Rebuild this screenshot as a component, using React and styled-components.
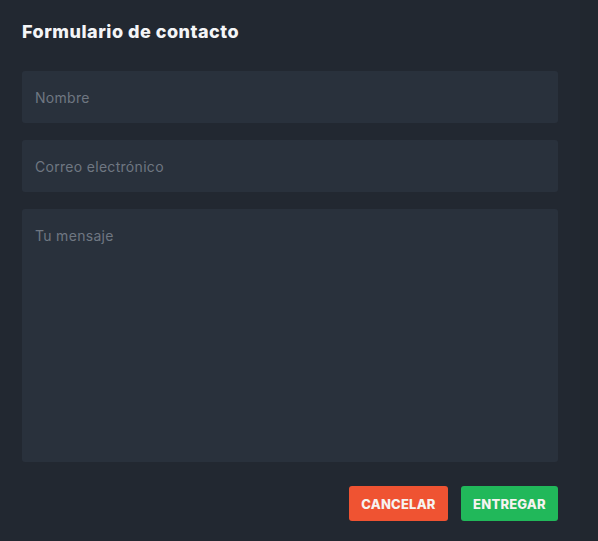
import React from "react";
import styled, { createGlobalStyle } from "styled-components";

const Global = createGlobalStyle`
  html, body { margin: 0; padding: 0; background: #222831; }
  body { font-family: "Inter", "Noto Sans", sans-serif; }
  * { box-sizing: border-box; }
`;

const Page = styled.div`
  width: 598px;
  height: 541px;
  background: #21272f;
  display: flex;
`;

const Modal = styled.form`
  width: 580px;
  background: #222831;
  padding: 21px 22px 0 22px;
  display: flex;
  flex-direction: column;
`;

const Title = styled.h2`
  margin: 0 0 28px 0;
  font-family: "Inter", "Noto Sans", sans-serif;
  font-weight: 800;
  font-size: 18px;
  line-height: 22px;
  color: #f4f5f7;
  letter-spacing: 0.5px;
`;

const Field = styled.input`
  height: 52px;
  width: 100%;
  border: none;
  outline: none;
  border-radius: 3px;
  background: #29313c;
  padding: 0 13px;
  font-family: "Inter", "Noto Sans", sans-serif;
  font-size: 14px;
  letter-spacing: 0.3px;
  color: #d0d4da;
  margin-bottom: 17px;
  &::placeholder { color: #6f7782; }
`;

const Area = styled.textarea`
  height: 253px;
  width: 100%;
  border: none;
  outline: none;
  resize: none;
  border-radius: 3px;
  background: #29313c;
  padding: 17px 13px;
  font-family: "Inter", "Noto Sans", sans-serif;
  font-size: 14px;
  letter-spacing: 0.3px;
  line-height: 20px;
  color: #d0d4da;
  &::placeholder { color: #6f7782; }
`;

const Actions = styled.div`
  display: flex;
  justify-content: flex-end;
  gap: 13px;
  margin-top: 24px;
`;

const Button = styled.button`
  height: 35px;
  width: ${(p) => p.$w}px;
  border: none;
  border-radius: 3px;
  background: ${(p) => p.$bg};
  color: #f6f3f0;
  font-family: "Inter", "Noto Sans", sans-serif;
  font-weight: 800;
  font-size: 13px;
  letter-spacing: 0.2px;
  text-transform: uppercase;
  cursor: pointer;
`;

export default function App() {
  return (
    <>
      <Global />
      <Page>
        <Modal onSubmit={(e) => e.preventDefault()}>
          <Title>Formulario de contacto</Title>
          <Field placeholder="Nombre" />
          <Field placeholder="Correo electrónico" />
          <Area placeholder="Tu mensaje" />
          <Actions>
            <Button type="button" $bg="#ef5332" $w={99}>Cancelar</Button>
            <Button type="submit" $bg="#21b85a" $w={97}>Entregar</Button>
          </Actions>
        </Modal>
      </Page>
    </>
  );
}
